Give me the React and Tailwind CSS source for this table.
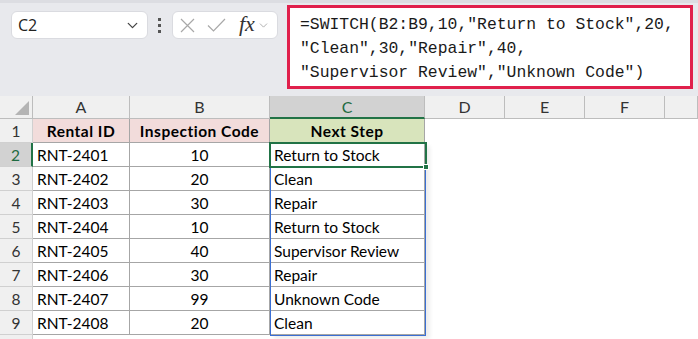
import { ChevronDown } from 'lucide-react';

const rows = [
  ['RNT-2401', '10', 'Return to Stock'],
  ['RNT-2402', '20', 'Clean'],
  ['RNT-2403', '30', 'Repair'],
  ['RNT-2404', '10', 'Return to Stock'],
  ['RNT-2405', '40', 'Supervisor Review'],
  ['RNT-2406', '30', 'Repair'],
  ['RNT-2407', '99', 'Unknown Code'],
  ['RNT-2408', '20', 'Clean'],
];

const cellFont = { fontFamily: 'Lato, "Open Sans", sans-serif' };

export default function App() {
  return (
    <div className="w-[698px] h-[339px] overflow-hidden bg-white relative" style={cellFont}>
      {/* toolbar / formula bar */}
      <div className="h-[96px] bg-[#e8e9ed] border-t-[3px] border-[#dcdde2] flex items-start relative">
        <div className="mt-[8px] ml-[11px] w-[137px] h-[28px] bg-white rounded-md border border-[#dadbe0] flex items-center justify-between pl-[6px] pr-[6px]">
          <span className="text-[16px] text-[#222]" style={{ fontFamily: '"Open Sans", sans-serif' }}>C2</span>
          <ChevronDown size={17} strokeWidth={1.8} className="text-[#444]" />
        </div>
        <div className="mt-[15px] ml-[10px] flex flex-col gap-[3px]">
          <span className="w-[3px] h-[3px] bg-[#555] block" />
          <span className="w-[3px] h-[3px] bg-[#555] block" />
          <span className="w-[3px] h-[3px] bg-[#555] block" />
        </div>
        <div className="mt-[8px] ml-[11px] w-[106px] h-[28px] bg-white rounded-md border border-[#dadbe0] flex items-center pl-[7px]">
          <svg width="15" height="15" viewBox="0 0 15 15" className="text-[#a8a8a8]">
            <path d="M1 1 14 14M14 1 1 14" stroke="currentColor" strokeWidth="1.2" fill="none" />
          </svg>
          <svg width="19" height="14" viewBox="0 0 19 14" className="text-[#a8a8a8] ml-[12px]">
            <path d="M1 7.5 6.5 13 18 1" stroke="currentColor" strokeWidth="1.2" fill="none" />
          </svg>
          <span className="text-[22px] italic text-[#333] ml-[13px] leading-none -mt-[3px]" style={{ fontFamily: '"Liberation Serif", serif' }}>fx</span>
          <ChevronDown size={13} strokeWidth={1.4} className="text-[#999] ml-[2px]" />
        </div>
        <div className="absolute left-[287px] top-[2px] w-[406px] h-[84px] bg-white border-[3px] border-[#e0204c] pl-[10px] pt-[5px]">
          <div className="text-[16.4px] leading-[24px] text-[#1a1a1a] whitespace-pre" style={{ fontFamily: '"Liberation Mono", monospace' }}>
            <div>=SWITCH(B2:B9,10,"Return to Stock",20,</div>
            <div>"Clean",30,"Repair",40,</div>
            <div>"Supervisor Review","Unknown Code")</div>
          </div>
        </div>
      </div>

      {/* grid */}
      <div className="grid grid-cols-[33px_97px_140px_155px_80px_80px_80px_33px] text-[15.5px] text-black">
        {/* column headers */}
        <div className="h-[23px] bg-[#f0f0f0] border-r border-b border-[#bdbdbd] relative">
          <div className="absolute right-[3px] bottom-[3px] w-0 h-0 border-l-[14px] border-l-transparent border-b-[14px] border-b-[#b4b4b4]" />
        </div>
        {['A', 'B', 'C', 'D', 'E', 'F', ''].map((l) => (
          <div
            key={l || 'G'}
            className={
              l === 'C'
                ? 'h-[23px] bg-[#d2d2d2] border-r border-[#bdbdbd] border-b-2 border-b-[#217346] flex items-center justify-center text-[#1e6b41] text-[16px]'
                : 'h-[23px] bg-[#f0f0f0] border-r border-b border-[#bdbdbd] flex items-center justify-center text-[#333] text-[16px]'
            }
          >
            {l}
          </div>
        ))}

        {/* row 1 */}
        <div className="h-[24px] bg-[#f0f0f0] border-r border-b border-[#d0d0d0] flex items-center justify-center text-[#333] pt-[2px]">1</div>
        <div className="h-[24px] bg-[#f2dcdb] border-r border-b border-[#a6a6a6] flex items-center justify-center font-bold tracking-[0.5px] pt-[2px]">Rental ID</div>
        <div className="h-[24px] bg-[#f2dcdb] border-r border-b border-[#a6a6a6] flex items-center justify-center font-bold tracking-[0.5px] pt-[2px]">Inspection Code</div>
        <div className="h-[24px] bg-[#d8e4bc] border-r border-b border-[#a6a6a6] flex items-center justify-center font-bold tracking-[0.5px] pt-[2px]">Next Step</div>
        <div className="h-[24px]" />
        <div className="h-[24px]" />
        <div className="h-[24px]" />
        <div className="h-[24px]" />

        {rows.map((r, i) => (
          <div key={r[0]} className="contents">
            <div
              className={
                i === 0
                  ? 'h-[24px] bg-[#d2d2d2] border-r-2 border-r-[#217346] border-b border-[#d0d0d0] flex items-center justify-center text-[#1e6b41] pt-[2px]'
                  : 'h-[24px] bg-[#f0f0f0] border-r border-b border-[#d0d0d0] flex items-center justify-center text-[#333] pt-[2px]'
              }
            >
              {i + 2}
            </div>
            <div className="h-[24px] border-r border-b border-[#a6a6a6] flex items-center pl-[4px] pt-[2px]">{r[0]}</div>
            <div className="h-[24px] border-r border-b border-[#a6a6a6] flex items-center justify-center pt-[2px]">{r[1]}</div>
            <div className="h-[24px] border-r border-b border-[#a6a6a6] flex items-center pl-[4px] pt-[2px]">{r[2]}</div>
            <div className="h-[24px]" />
            <div className="h-[24px]" />
            <div className="h-[24px]" />
            <div className="h-[24px]" />
          </div>
        ))}

        <div className="h-[24px] bg-[#f0f0f0] border-r border-[#d0d0d0]" />
      </div>

      {/* spill range border */}
      <div className="absolute left-[270px] top-[143px] w-[156px] h-[193px] border border-[#3a6fd4] shadow-[4px_3px_4px_rgba(0,0,0,0.07)] pointer-events-none" />
      {/* active cell */}
      <div className="absolute left-[269px] top-[142px] w-[158px] h-[26px] border-2 border-[#217346] pointer-events-none">
        <div className="absolute -right-[4px] -bottom-[4px] w-[6px] h-[6px] bg-[#217346] border border-white" />
      </div>
    </div>
  );
}
